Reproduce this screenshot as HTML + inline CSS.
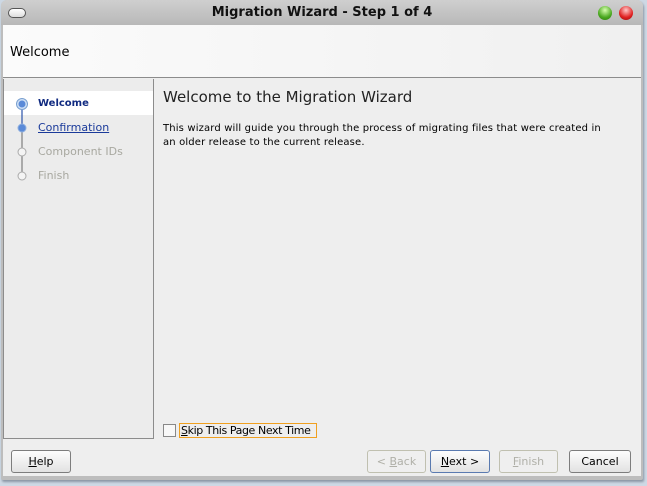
<!DOCTYPE html>
<html><head><style>
*{margin:0;padding:0;box-sizing:border-box}
body{width:647px;height:486px;background:#cdd8e4;position:relative;overflow:hidden;font-family:"DejaVu Sans","Liberation Sans",sans-serif;font-size:10px;color:#000}
.win{position:absolute;left:1px;top:0;width:642px;height:480px;background:#bdbdbd;border-radius:6px 6px 2px 2px;box-shadow:1px 2px 2px #8a97a5}
.title{position:absolute;left:0;top:0;width:642px;height:25px;background:linear-gradient(#cfcfcf,#b8b8b8);border-radius:6px 6px 0 0;text-align:center;font-size:13px;font-weight:bold;line-height:26px;color:#111}
.pill{position:absolute;left:7px;top:8px;width:18px;height:10px;border:1px solid #555;border-radius:5px;background:linear-gradient(#fff,#ddd)}
.dot{position:absolute;top:6px;width:14px;height:14px;border-radius:50%}
.client{position:absolute;left:2px;top:25px;width:638px;height:451px;background:#eeeeee}
.hdr{position:absolute;left:0;top:0;width:638px;height:53px;background:linear-gradient(90deg,#fbfbfb,#f0f0f0);border-bottom:1px solid #8c8c8c;font-size:13px;padding:20px 0 0 7px}
.left{position:absolute;left:0;top:54px;width:151px;height:360px;background:#ececec;border:1px solid #8c8c8c;border-top:none}
.sel{position:absolute;left:0;top:12px;width:149px;height:24px;background:#fff}
.step{position:absolute;left:34px;font-size:11px}
.right{position:absolute;left:160px}
.btn{position:absolute;top:425px;height:23px;border:1px solid #7d7d7d;border-radius:3px;background:linear-gradient(#fdfdfd,#e2e2e2);font-size:11px;text-align:center;line-height:21px}
.dis{border-color:#c0c0b0;color:#b0b0a8;background:#efefef}
</style></head><body>
<div class="win">
<div class="title"><div class="pill"></div>Migration Wizard - Step 1 of 4
<div class="dot" style="left:597px;background:radial-gradient(circle at 50% 30%,#d8ffb0,#4aa820 60%,#2c7a10)"></div>
<div class="dot" style="left:618px;background:radial-gradient(circle at 50% 30%,#ffc8c8,#e02020 60%,#901010)"></div>
</div>
<div class="client">
<div class="hdr">Welcome</div>
<div class="left">
<div class="sel"></div>
<svg style="position:absolute;left:10px;top:17px" width="16" height="90">
<line x1="8" y1="10" x2="8" y2="32" stroke="#3a5fb0" stroke-width="1.3"/>
<line x1="8" y1="34" x2="8" y2="82" stroke="#888" stroke-width="1.3"/>
<circle cx="8" cy="8" r="5.5" fill="#cfe0f5" stroke="#7aa0d0"/>
<circle cx="8" cy="8" r="3.5" fill="#5a8ad8"/>
<circle cx="8" cy="32" r="4" fill="#5a8ad8" stroke="#8fb0e0"/>
<circle cx="8" cy="56" r="4" fill="#f4f4f4" stroke="#aaa"/>
<circle cx="8" cy="80" r="4" fill="#f4f4f4" stroke="#aaa"/>
</svg>
<div class="step" style="top:19px;font-weight:bold;color:#102a80;font-size:10px">Welcome</div>
<div class="step" style="top:42px;color:#1a3a9a;text-decoration:underline">Confirmation</div>
<div class="step" style="top:66px;color:#a8a8a0">Component IDs</div>
<div class="step" style="top:90px;color:#a8a8a0">Finish</div>
</div>
<div class="right" style="top:63px;font-size:15px;color:#222">Welcome to the Migration Wizard</div>
<div class="right" style="top:97px;line-height:14px;font-size:10px;width:445px;letter-spacing:0.15px">This wizard will guide you through the process of migrating files that were created in an older release to the current release.</div>
<div style="position:absolute;left:160px;top:399px;width:13px;height:13px;border:1px solid #888;background:#f8f8f8"></div>
<div style="position:absolute;left:176px;top:398px;height:15px;width:138px;border:1px solid #f0a020;font-size:11px;line-height:13px;padding-left:1px;white-space:nowrap;letter-spacing:-0.4px;overflow:hidden"><u>S</u>kip This Page Next Time</div>
<div class="btn" style="left:8px;width:60px"><u>H</u>elp</div>
<div class="btn dis" style="left:364px;width:59px">&lt; <u>B</u>ack</div>
<div class="btn" style="left:427px;width:60px;border-color:#5a7ab0"><u>N</u>ext &gt;</div>
<div class="btn dis" style="left:496px;width:59px"><u>F</u>inish</div>
<div class="btn" style="left:566px;width:62px">Cancel</div>
</div>
</div>
</body></html>
